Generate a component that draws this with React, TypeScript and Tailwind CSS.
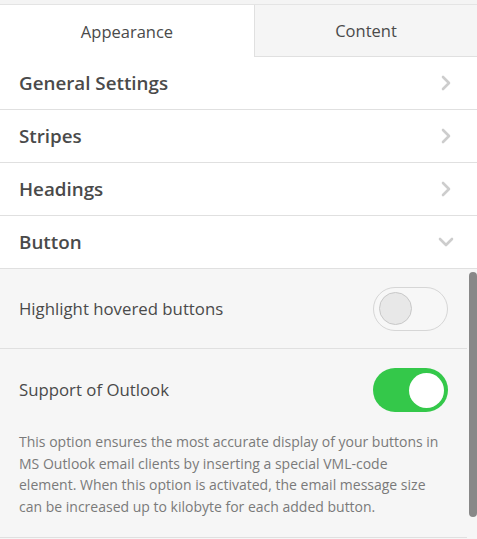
import { ChevronRight, ChevronDown } from "lucide-react";

function Section({ title, open }: { title: string; open?: boolean }) {
    return (
        <div className="flex h-[53px] items-center justify-between border-b border-[#e0e0e0] pl-[19px] pr-[19px]">
            <div className="text-[18.8px] font-semibold text-[#4a4a4a]">{title}</div>
            {open ? (
                <ChevronDown size={24} strokeWidth={2.6} className="text-[#cdcdcd]" />
            ) : (
                <ChevronRight size={24} strokeWidth={2.6} className="text-[#cdcdcd]" />
            )}
        </div>
    );
}

function Toggle({ on }: { on?: boolean }) {
    return on ? (
        <div className="flex h-[44px] w-[75px] items-center justify-end rounded-full bg-[#34c84a] pr-[4px]">
            <div className="h-[35px] w-[35px] rounded-full bg-white"></div>
        </div>
    ) : (
        <div className="flex h-[44px] w-[75px] items-center rounded-full border border-[#d6d6d6] bg-[#f7f7f7] pl-[5px]">
            <div className="h-[33px] w-[33px] rounded-full border border-[#c8c8c8] bg-[#e8e8e8]"></div>
        </div>
    );
}

export default function App() {
    return (
        <div className="h-[539px] w-[477px] overflow-hidden bg-white text-[#4a4a4a]" style={{ fontFamily: '"Open Sans", "Noto Sans", sans-serif' }}>
            <div className="h-[5px] border-b border-[#e4e4e4] bg-[#f4f4f4]"></div>

            <div className="flex h-[52px]">
                <div className="flex w-[254px] items-center justify-center bg-white pt-[2px] text-[16.5px] text-[#4a4a4a]">Appearance</div>
                <div className="flex flex-1 items-center justify-center border-b border-l border-[#e0e0e0] bg-[#f5f5f5] pt-[2px] text-[16.5px] text-[#4a4a4a]">Content</div>
            </div>

            <Section title="General Settings" />
            <Section title="Stripes" />
            <Section title="Headings" />
            <Section title="Button" open />

            <div className="relative h-[270px] bg-[#f6f6f6]">
                <div className="mr-[10px]">
                    <div className="flex h-[80px] items-center justify-between border-b border-[#e0e0e0] pl-[19px] pr-[19px]">
                        <div className="text-[16.8px] text-[#4a4a4a]">Highlight hovered buttons</div>
                        <Toggle />
                    </div>

                    <div className="border-b border-[#e0e0e0] pb-[20px] pl-[19px] pr-[19px]">
                        <div className="flex h-[82px] items-center justify-between">
                            <div className="text-[16.8px] text-[#4a4a4a]">Support of Outlook</div>
                            <Toggle on />
                        </div>
                        <p className="text-[14px] leading-[21.5px] text-[#7a7a7a]">
                            This option ensures the most accurate display of your buttons in MS Outlook email clients by inserting a special VML-code element. When this option is activated, the email message size can be increased up to kilobyte for each added button.
                        </p>
                    </div>
                </div>

                <div className="absolute right-0 top-[3px] h-[245px] w-[8px] rounded-full bg-[#888888]"></div>
            </div>
        </div>
    );
}
